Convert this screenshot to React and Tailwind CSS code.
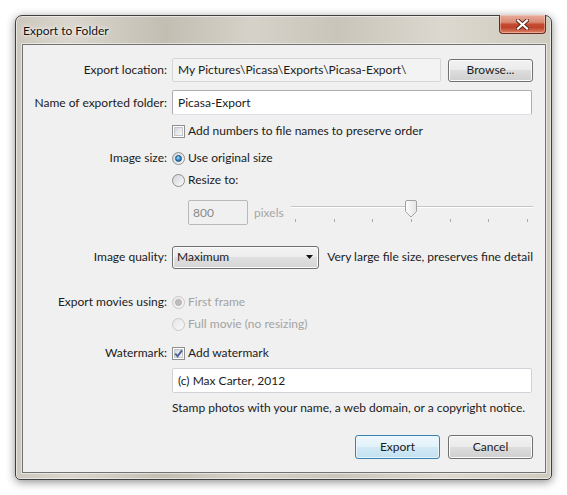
import React from "react"

function Check({ checked }) {
  return (
    <span className="relative block w-[13px] h-[13px] shrink-0 border border-[#8e8f8f] bg-white p-[1px]">
      <span className="block w-full h-full border border-[#c2c5c9] bg-[linear-gradient(135deg,#d3d6da,#f9f9f9)]" />
      {checked && (
        <svg className="absolute left-0 top-0" width="11" height="11" viewBox="0 0 11 11">
          <path d="M2.2 5.6 L4.6 8.2 L9 2.4" fill="none" stroke="#4b5f98" strokeWidth="1.9" />
        </svg>
      )}
    </span>
  )
}

function Radio({ on, disabled }) {
  return (
    <span
      className={`w-[13px] h-[13px] shrink-0 rounded-full border flex items-center justify-center ${
        disabled
          ? "border-[#c9c9c9] bg-[linear-gradient(135deg,#e6e6e6,#f8f8f8)]"
          : "border-[#8e8f8f] bg-[linear-gradient(135deg,#cfd2d6,#fcfcfc)]"
      }`}
    >
      {on && (
        <span
          className={`w-[7px] h-[7px] rounded-full ${
            disabled
              ? "bg-[#bdbdbd] border border-[#b0b0b0]"
              : "border border-[#1d4f7d] bg-[radial-gradient(circle_at_40%_35%,#a8def8,#2b84c6_55%,#145c96)]"
          }`}
        />
      )}
    </span>
  )
}

function Row({ label, className, children }) {
  return (
    <div className={`flex items-center ${className}`}>
      <div className="w-[144px] shrink-0 text-right whitespace-nowrap">{label}</div>
      <div className="ml-[5px] w-[361px] flex items-center">{children}</div>
    </div>
  )
}

const btn =
  "w-[85px] h-[23px] rounded-[3px] border border-[#707070] shadow-[inset_0_0_0_1px_#fbfbfb] bg-[linear-gradient(#f2f2f2_0%,#ebebeb_50%,#dddddd_50%,#cfcfcf_100%)] flex items-center justify-center"

export default function App() {
  const ticks = [0, 1, 2, 3, 4, 5, 6]

  return (
    <div className="w-[567px] h-[495px] bg-white pt-[15px] pl-[15px] font-[Lato,sans-serif] text-[12px] leading-none text-[#1b1b1b]">
      {/* window frame */}
      <div className="w-[537px] h-[465px] flex flex-col rounded-t-[7px] rounded-b-[5px] border border-[#3f3f3f] pl-[6px] pr-[5px] pb-[6px] shadow-[0_2px_10px_rgba(0,0,0,0.45),inset_0_0_0_1px_rgba(255,255,255,0.55)] bg-[linear-gradient(90deg,#cdc8bd_0%,#dad6cd_10%,#c3beb2_28%,#d6d2c9_44%,#cac5ba_60%,#dcd8cf_80%,#cfcabe_100%)]">
        {/* title bar */}
        <div className="h-[28px] flex items-start justify-between">
          <span className="h-[28px] flex items-center pl-[1px] pt-[1px] text-[#111] [text-shadow:0_0_6px_#fff,0_0_3px_#fff]">
            Export to Folder
          </span>
          <div className="w-[47px] h-[19px] -mt-[1px] rounded-b-[4px] border border-t-0 border-[#6b2a1e] shadow-[inset_0_0_0_1px_rgba(255,220,210,0.45)] bg-[linear-gradient(#e9ad9d_0%,#d98a74_40%,#c44a32_52%,#c0442c_70%,#dc8466_100%)] flex items-center justify-center">
            <svg width="13" height="11" viewBox="0 0 13 11">
              <path d="M2 1.5 L11 9.5 M11 1.5 L2 9.5" stroke="#5a2418" strokeWidth="4" strokeLinecap="square" />
              <path d="M2 1.5 L11 9.5 M11 1.5 L2 9.5" stroke="#ffffff" strokeWidth="2.2" strokeLinecap="square" />
            </svg>
          </div>
        </div>

        {/* client area */}
        <div className="flex-1 bg-[#f0f0f0] border border-[#727272] shadow-[0_0_0_1px_rgba(255,255,255,0.5)] pt-[13px] flex flex-col">
          <Row label="Export location:" className="h-[24px]">
            <div className="w-[269px] h-[24px] rounded-[2px] border border-[#d6d6d6] bg-[#f3f3f3] pl-[5px] flex items-center whitespace-nowrap">
              My Pictures\Picasa\Exports\Picasa-Export\
            </div>
            <button className={`ml-[7px] ${btn}`}>Browse...</button>
          </Row>

          <Row label="Name of exported folder:" className="h-[25px] mt-[8px]">
            <div className="w-[360px] h-[25px] rounded-[2px] border border-[#abadb3] border-b-[#dbdfe6] bg-white pl-[5px] flex items-center">
              Picasa-Export
            </div>
          </Row>

          <Row label="" className="h-[16px] mt-[8px]">
            <Check />
            <span className="ml-[3px]">Add numbers to file names to preserve order</span>
          </Row>

          <Row label="Image size:" className="h-[16px] mt-[11px]">
            <Radio on />
            <span className="ml-[3px]">Use original size</span>
          </Row>

          <Row label="" className="h-[16px] mt-[6px]">
            <Radio />
            <span className="ml-[3px]">Resize to:</span>
          </Row>

          <Row label="" className="h-[25px] mt-[12px]">
            <div className="ml-[16px] w-[60px] h-[25px] rounded-[2px] border border-[#b9b9b9] bg-[#f0f0f0] pl-[4px] flex items-center text-[#8a8a8a]">
              800
            </div>
            <span className="ml-[6px] text-[#a6a6a6]">pixels</span>
            <div className="ml-auto w-[242px] h-[25px] flex flex-col">
              <div className="relative h-[19px]">
                <div className="mt-[6px] h-[1px] bg-[#c4c4c4]" />
                <div className="h-[1px] bg-white" />
                <svg className="absolute left-[114px] top-0" width="12" height="18" viewBox="0 0 12 18">
                  <defs>
                    <linearGradient id="th" x1="0" y1="0" x2="1" y2="0">
                      <stop offset="0" stopColor="#fdfdfd" />
                      <stop offset="1" stopColor="#e4e4e4" />
                    </linearGradient>
                  </defs>
                  <path d="M2 0.5 H10 A1.5 1.5 0 0 1 11.5 2 V11.5 L6 17 L0.5 11.5 V2 A1.5 1.5 0 0 1 2 0.5 Z" fill="url(#th)" stroke="#a2a2a2" />
                </svg>
              </div>
              <div className="flex justify-between pl-[4px] pr-[5px]">
                {ticks.map((t) => (
                  <span key={t} className="w-[1px] h-[3px] bg-[#a9a9a9]" />
                ))}
              </div>
            </div>
          </Row>

          <Row label="Image quality:" className="h-[24px] mt-[20px]">
            <div className="w-[149px] h-[23px] rounded-[3px] border border-[#707070] shadow-[inset_0_0_0_1px_#fbfbfb] bg-[linear-gradient(#f3f3f3_0%,#ececec_50%,#e0e0e0_50%,#d5d5d5_100%)] pl-[4px] pr-[4px] flex items-center justify-between">
              <span>Maximum</span>
              <svg width="8" height="5" viewBox="0 0 8 5">
                <path d="M0 0 H7 L3.5 4 Z" fill="#111" />
              </svg>
            </div>
            <span className="ml-[8px] whitespace-nowrap">Very large file size, preserves fine detail</span>
          </Row>

          <Row label="Export movies using:" className="h-[16px] mt-[25px]">
            <Radio on disabled />
            <span className="ml-[3px] text-[#a3a3a3]">First frame</span>
          </Row>

          <Row label="" className="h-[16px] mt-[6px]">
            <Radio disabled />
            <span className="ml-[3px] text-[#a3a3a3]">Full movie (no resizing)</span>
          </Row>

          <Row label="Watermark:" className="h-[16px] mt-[13px]">
            <Check checked />
            <span className="ml-[3px]">Add watermark</span>
          </Row>

          <Row label="" className="h-[25px] mt-[7px]">
            <div className="w-[360px] h-[25px] rounded-[2px] border border-[#cfd3d8] bg-white pl-[5px] flex items-center">
              (c) Max Carter, 2012
            </div>
          </Row>

          <Row label="" className="h-[16px] mt-[7px]">
            <span className="whitespace-nowrap">Stamp photos with your name, a web domain, or a copyright notice.</span>
          </Row>

          <Row label="" className="h-[24px] mt-[19px]">
            <div className="w-[361px] flex justify-end gap-[8px]">
              <button className="w-[85px] h-[24px] rounded-[3px] border border-[#3c7fb1] shadow-[inset_0_0_0_1px_#e8f6fd] bg-[linear-gradient(#eef7fc_0%,#e2f1f9_50%,#d2e9f5_50%,#c3e1f1_100%)] flex items-center justify-center">
                Export
              </button>
              <button className={`${btn} h-[24px]`}>Cancel</button>
            </div>
          </Row>
        </div>
      </div>
    </div>
  )
}
